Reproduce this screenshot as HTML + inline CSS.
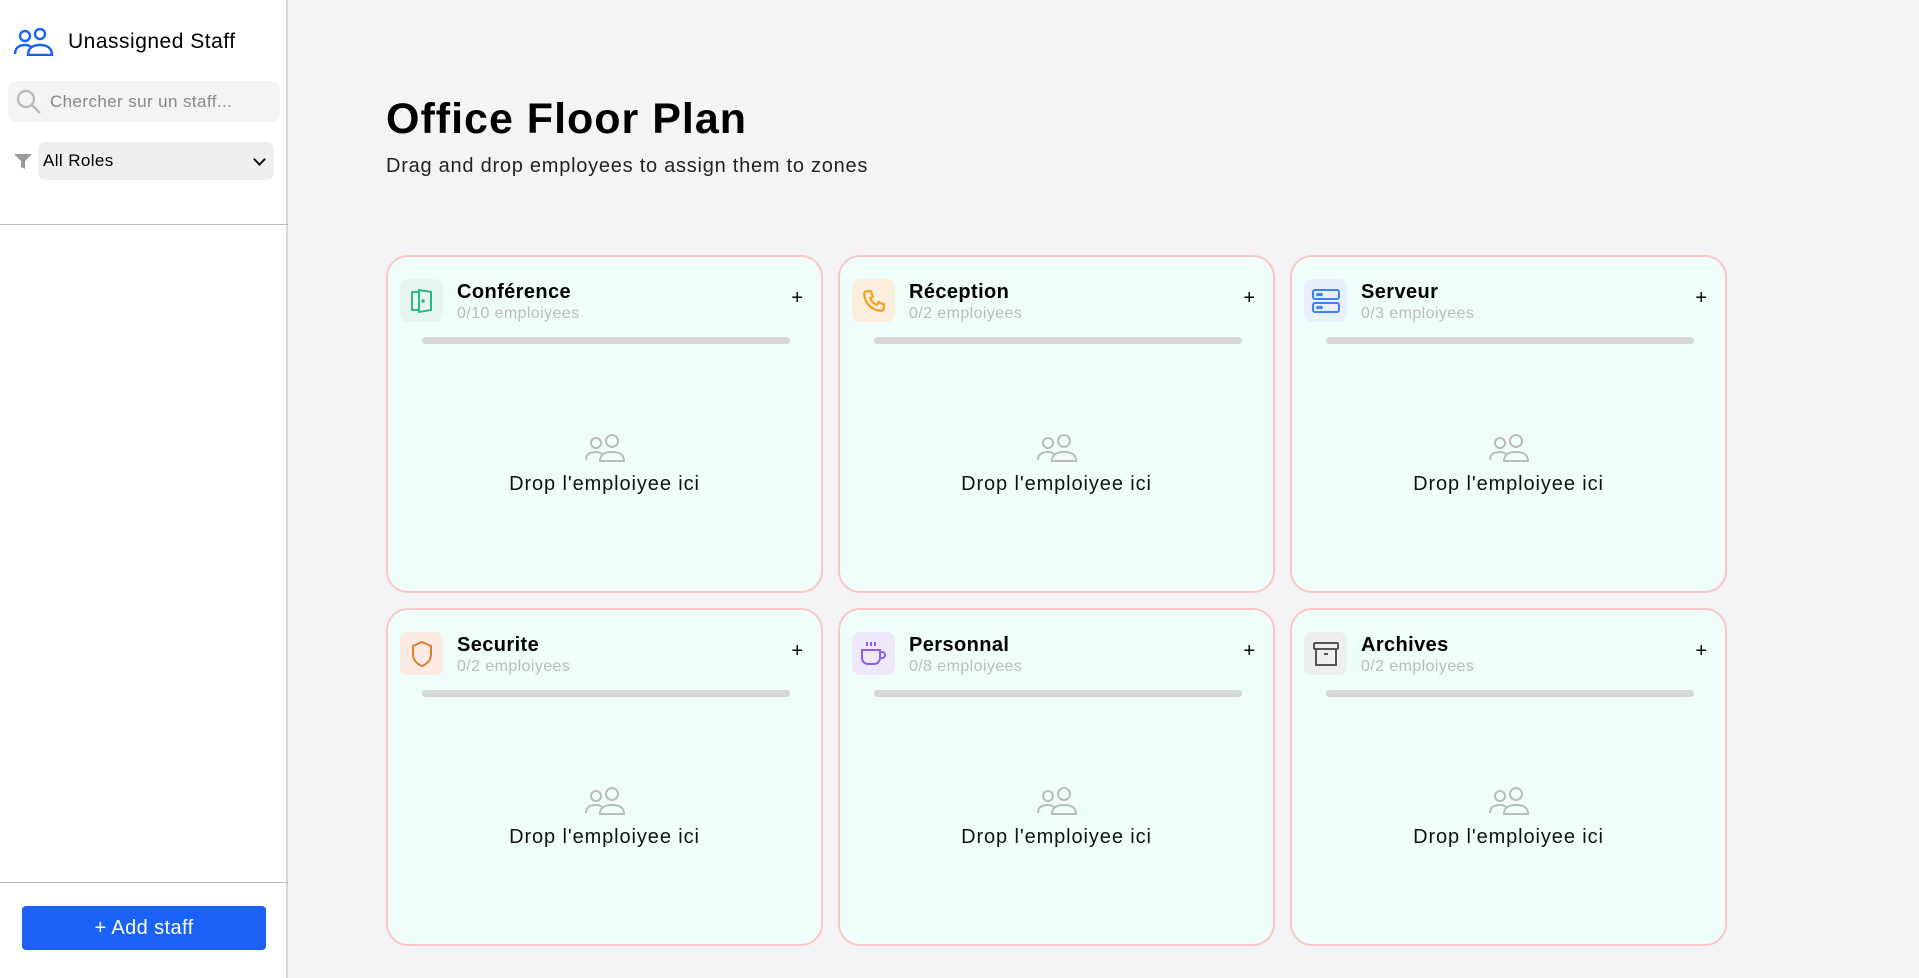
<!DOCTYPE html>
<html><head><meta charset="utf-8"><style>
*{box-sizing:border-box;margin:0;padding:0}
body{width:1919px;height:978px;background:#f4f4f6;font-family:"Liberation Sans",sans-serif;position:relative;overflow:hidden;color:#000}
.side{position:absolute;left:0;top:0;width:288px;height:978px;background:#fff;border-right:2px solid #d8d8d8}
.hd{position:absolute;left:14px;top:28px;display:flex;align-items:center;gap:14px;font-size:21px;letter-spacing:0.5px}
.search{position:absolute;left:8px;top:81px;width:272px;height:41px;background:#f4f4f4;border-radius:9px;display:flex;align-items:center;padding-left:8px;gap:8px;color:#888;font-size:17px;letter-spacing:0.4px}
.sel{position:absolute;left:38px;top:142px;width:236px;height:38px;background:#efefef;border-radius:7px;font-size:17px;padding:9px 0 0 5px;letter-spacing:0.4px}
.sel:after{content:"";position:absolute;right:10px;top:13px;width:7px;height:7px;border-right:2px solid #111;border-bottom:2px solid #111;transform:rotate(45deg)}
.filt{position:absolute;left:14px;top:154px}
.hr1{position:absolute;left:0;top:224px;width:288px;height:1px;background:#bbb}
.hr2{position:absolute;left:0;top:882px;width:288px;height:1px;background:#bbb}
.btn{position:absolute;left:22px;top:906px;width:244px;height:44px;background:#1a62f6;border-radius:4px;color:#fff;font-size:20px;text-align:center;line-height:44px;letter-spacing:0.4px}
h1{position:absolute;left:386px;top:95px;font-size:43px;font-weight:700;letter-spacing:1px}
.sub{position:absolute;left:386px;top:155px;font-size:20px;color:#222;letter-spacing:0.75px}
.card{position:absolute;width:437px;height:338px;background:#effefa;border:2px solid #fcc6c6;border-radius:22px}
.ic{position:absolute;left:12px;top:22px;width:43px;height:43px;border-radius:8px;display:flex;align-items:center;justify-content:center}
.t{position:absolute;left:69px;top:24px;font-size:20px;font-weight:700;letter-spacing:0.4px}
.n{position:absolute;left:69px;top:48px;font-size:16px;color:#bbb;letter-spacing:0.4px}
.p{position:absolute;right:18px;top:30px;font-size:20px}
.bar{position:absolute;left:34px;top:80px;width:368px;height:7px;border-radius:4px;background:#d6d6d6}
.dr{position:absolute;left:0;width:100%;top:177px;text-align:center}
.dr div{font-size:20px;margin-top:6px;color:#111;letter-spacing:0.9px}
</style></head><body>
<div class="side">
<div class="hd"><svg width="40" height="28" viewBox="0 0 40 28" fill="none" stroke="#1a62f6" stroke-width="2.4"><circle cx="11" cy="8" r="5"/><path d="M1 26c0-6 4-9 10-9 3 0 5 1 6 2"/><circle cx="26" cy="6" r="5"/><path d="M14 27c0-7 5-10 12-10s12 3 12 10z"/></svg>Unassigned Staff</div>
<div class="search"><svg width="26" height="26" viewBox="0 0 26 26" fill="none" stroke="#bbb" stroke-width="2.4"><circle cx="10" cy="10" r="8"/><path d="M16 16l8 8"/></svg>Chercher sur un staff...</div>
<svg class="filt" width="18" height="15" viewBox="0 0 18 15"><path d="M0 0h18l-7 7v8l-4-2V7z" fill="#999"/></svg>
<div class="sel">All Roles</div>
<div class="hr1"></div><div class="hr2"></div>
<div class="btn">+ Add staff</div>
</div>
<h1>Office Floor Plan</h1>
<div class="sub">Drag and drop employees to assign them to zones</div>

<div class="card" style="left:386px;top:255px">
<div class="ic" style="background:#e6f5ef"><svg width="24" height="26" viewBox="0 0 24 26" fill="none" stroke="#2bb98a" stroke-width="2"><path d="M9 4H2v18h7"/><path d="M9 2l12 2v18l-12 2z"/><circle cx="13" cy="13" r=".8" fill="#2bb98a"/></svg></div>
<div class="t">Conférence</div><div class="n">0/10 emploiyees</div><div class="p">+</div><div class="bar"></div>
<div class="dr"><svg width="42" height="28" viewBox="0 0 42 28" fill="none" stroke="#bbb" stroke-width="2"><circle cx="12" cy="9" r="5"/><path d="M2 26c0-6 4-8 10-8 3 0 5 1 6 2"/><circle cx="28" cy="7" r="6"/><path d="M16 27c0-7 5-9 12-9s12 2 12 9z"/></svg><div>Drop l'emploiyee ici</div></div></div>

<div class="card" style="left:838px;top:255px">
<div class="ic" style="background:#fbeedd"><svg width="26" height="26" viewBox="0 0 24 24" fill="none" stroke="#f59e1b" stroke-width="2"><path d="M5 3h4l2 5-2.5 1.5a11 11 0 0 0 6 6L16 13l5 2v4a2 2 0 0 1-2 2A16 16 0 0 1 3 5a2 2 0 0 1 2-2"/></svg></div>
<div class="t">Réception</div><div class="n">0/2 emploiyees</div><div class="p">+</div><div class="bar"></div>
<div class="dr"><svg width="42" height="28" viewBox="0 0 42 28" fill="none" stroke="#bbb" stroke-width="2"><circle cx="12" cy="9" r="5"/><path d="M2 26c0-6 4-8 10-8 3 0 5 1 6 2"/><circle cx="28" cy="7" r="6"/><path d="M16 27c0-7 5-9 12-9s12 2 12 9z"/></svg><div>Drop l'emploiyee ici</div></div></div>

<div class="card" style="left:1290px;top:255px">
<div class="ic" style="background:#eaf0fb"><svg width="28" height="26" viewBox="0 0 28 26" fill="none" stroke="#3b82f6" stroke-width="2"><rect x="1" y="2" width="26" height="9" rx="2"/><rect x="1" y="15" width="26" height="9" rx="2"/><circle cx="6" cy="6.5" r=".8" fill="#3b82f6"/><circle cx="9" cy="6.5" r=".8" fill="#3b82f6"/><circle cx="6" cy="19.5" r=".8" fill="#3b82f6"/><circle cx="9" cy="19.5" r=".8" fill="#3b82f6"/></svg></div>
<div class="t">Serveur</div><div class="n">0/3 emploiyees</div><div class="p">+</div><div class="bar"></div>
<div class="dr"><svg width="42" height="28" viewBox="0 0 42 28" fill="none" stroke="#bbb" stroke-width="2"><circle cx="12" cy="9" r="5"/><path d="M2 26c0-6 4-8 10-8 3 0 5 1 6 2"/><circle cx="28" cy="7" r="6"/><path d="M16 27c0-7 5-9 12-9s12 2 12 9z"/></svg><div>Drop l'emploiyee ici</div></div></div>

<div class="card" style="left:386px;top:608px">
<div class="ic" style="background:#fbebe3"><svg width="24" height="28" viewBox="0 0 24 28" fill="none" stroke="#e07b2c" stroke-width="2"><path d="M12 2l9 4v8c0 6-4 10-9 12-5-2-9-6-9-12V6z"/></svg></div>
<div class="t">Securite</div><div class="n">0/2 emploiyees</div><div class="p">+</div><div class="bar"></div>
<div class="dr"><svg width="42" height="28" viewBox="0 0 42 28" fill="none" stroke="#bbb" stroke-width="2"><circle cx="12" cy="9" r="5"/><path d="M2 26c0-6 4-8 10-8 3 0 5 1 6 2"/><circle cx="28" cy="7" r="6"/><path d="M16 27c0-7 5-9 12-9s12 2 12 9z"/></svg><div>Drop l'emploiyee ici</div></div></div>

<div class="card" style="left:838px;top:608px">
<div class="ic" style="background:#efe8fb"><svg width="30" height="28" viewBox="0 0 30 28" fill="none" stroke="#8b5cf6" stroke-width="2"><path d="M8 2v4M12 2v4M16 2v4"/><path d="M3 10h18v8a6 6 0 0 1-6 6H9a6 6 0 0 1-6-6z"/><path d="M21 12h2a3 3 0 0 1 0 6h-2"/></svg></div>
<div class="t">Personnal</div><div class="n">0/8 emploiyees</div><div class="p">+</div><div class="bar"></div>
<div class="dr"><svg width="42" height="28" viewBox="0 0 42 28" fill="none" stroke="#bbb" stroke-width="2"><circle cx="12" cy="9" r="5"/><path d="M2 26c0-6 4-8 10-8 3 0 5 1 6 2"/><circle cx="28" cy="7" r="6"/><path d="M16 27c0-7 5-9 12-9s12 2 12 9z"/></svg><div>Drop l'emploiyee ici</div></div></div>

<div class="card" style="left:1290px;top:608px">
<div class="ic" style="background:#eeeeee"><svg width="28" height="28" viewBox="0 0 28 28" fill="none" stroke="#555" stroke-width="2"><rect x="2" y="3" width="24" height="6" rx="1"/><path d="M4 9v16h20V9"/><path d="M12 14h4"/></svg></div>
<div class="t">Archives</div><div class="n">0/2 emploiyees</div><div class="p">+</div><div class="bar"></div>
<div class="dr"><svg width="42" height="28" viewBox="0 0 42 28" fill="none" stroke="#bbb" stroke-width="2"><circle cx="12" cy="9" r="5"/><path d="M2 26c0-6 4-8 10-8 3 0 5 1 6 2"/><circle cx="28" cy="7" r="6"/><path d="M16 27c0-7 5-9 12-9s12 2 12 9z"/></svg><div>Drop l'emploiyee ici</div></div></div>
</body></html>
